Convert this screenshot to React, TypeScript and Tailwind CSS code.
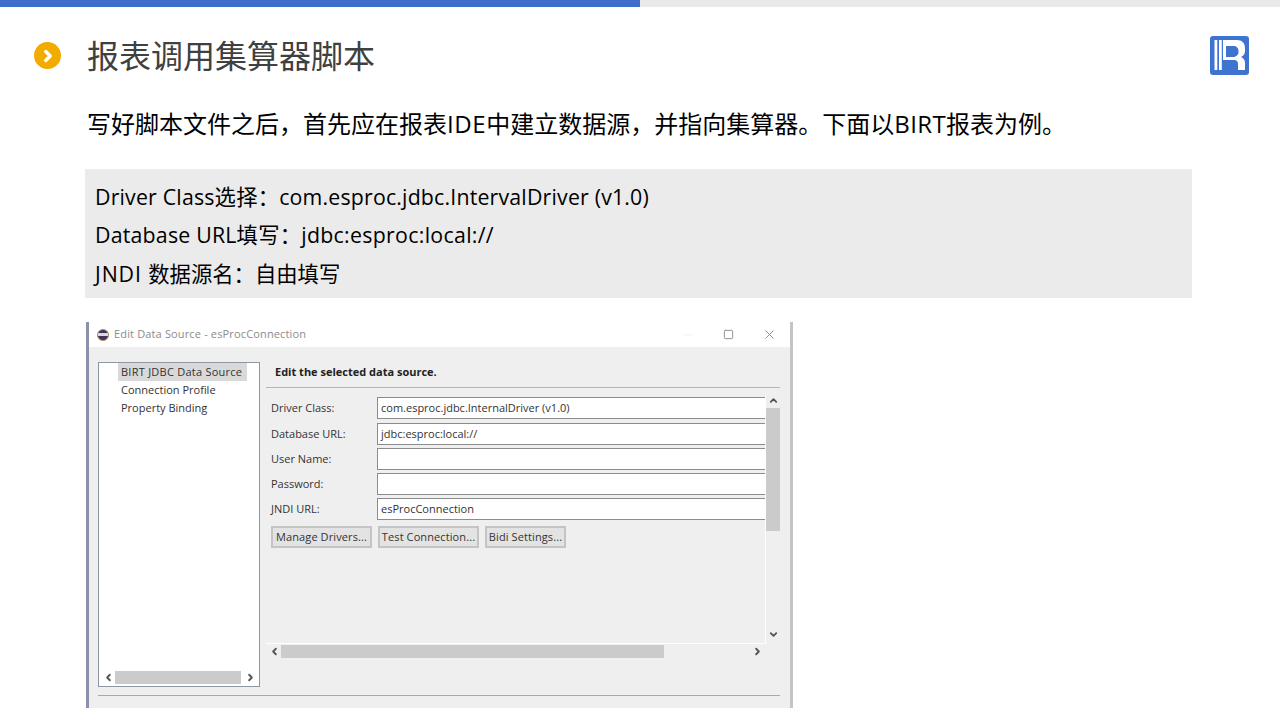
import { ChevronDown, ChevronLeft, ChevronRight, ChevronUp, Minus, Square, X } from "lucide-react";

const FONT = "font-['Open_Sans','Noto_Sans_CJK_SC',sans-serif]";

const fields = [
    { label: "Driver Class:", value: "com.esproc.jdbc.InternalDriver (v1.0)", gap: "mb-[4px]" },
    { label: "Database URL:", value: "jdbc:esproc:local://", gap: "mb-[3px]" },
    { label: "User Name:", value: "", gap: "mb-[3px]" },
    { label: "Password:", value: "", gap: "mb-[3px]" },
    { label: "JNDI URL:", value: "esProcConnection", gap: "mb-[3px]" },
];

const Logo = () => (
    <svg width="39" height="39" viewBox="0 0 39 39">
        <rect width="39" height="39" rx="3" fill="#3f73d0" />
        <rect x="4.500" y="4" width="2.800" height="30" fill="#fff" />
        <rect x="9" y="4" width="2.800" height="30" fill="#fff" />
        <path
            fillRule="evenodd"
            d="M13 4h14c5 0 8 3 8 8v3c0 3-1.500 5-4 6 2.500 1 4 3 4 6v7h-7v-6c0-2.500-1.500-4-4-4h-11zM16 10v11h7c2.500 0 5.500-1.500 5.500-5v-1c0-3-2-5-5-5z"
            fill="#fff"
        />
    </svg>
);

const DialogButton = ({ label, width }: { label: string; width: string }) => (
    <div className={`${width} h-[22px] flex items-center justify-center bg-[#e3e3e3] border-2 border-[#c4c4c4] text-[11px] tracking-[0.1px] text-[#333]`}>
        {label}
    </div>
);

const EditDataSource = () => (
    <div className={`${FONT} w-[707px] h-[386px] ml-[86px] mt-[24px] flex flex-col border-l-[3px] border-l-[#8c90a8] border-r-[3px] border-r-[#c4c4c4] bg-[#efefef] text-[#333]`}>
        <div className="h-[25px] mb-[1px] bg-white flex items-center pl-[8px] pr-[13px] shrink-0">
            <div className="w-[12px] h-[12px] rounded-full bg-[#3b3560] border border-[#c08a50] flex items-center">
                <div className="w-full h-[3px] bg-[#d8d8e8]" />
            </div>
            <span className="ml-[5px] text-[11px] tracking-[0.15px] text-[#8c8c8c]">Edit Data Source - esProcConnection</span>
            <Minus size={12} strokeWidth={1} className="ml-auto text-[#e0e0e0]" />
            <Square size={11} strokeWidth={2} className="ml-[29px] text-[#888]" />
            <X size={15} strokeWidth={1.5} className="ml-[28px] text-[#888]" />
        </div>

        <div className="flex-1 flex flex-col pl-[9px] pr-[10px] pt-[14px]">
            <div className="flex h-[325px]">
                <div className="w-[162px] border border-[#8f96a3] bg-white flex flex-col pl-[19px] text-[11px] leading-[18px]">
                    <div className="w-[129px] h-[18px] bg-[#d9d9d9] pl-[3px] tracking-[0.25px]">BIRT JDBC Data Source</div>
                    <div className="pl-[3px]">Connection Profile</div>
                    <div className="pl-[3px]">Property Binding</div>
                    <div className="mt-auto -ml-[19px] mb-[2px] flex items-center h-[13px] pl-[2px] pr-[2px] text-[#555]">
                        <ChevronLeft size={11} strokeWidth={4} className="ml-[2px]" />
                        <div className="w-[126px] h-[13px] ml-[1px] bg-[#cbcbcb]" />
                        <ChevronRight size={11} strokeWidth={4} className="ml-[4px]" />
                    </div>
                </div>

                <div className="w-[514px] ml-[6px] flex flex-col">
                    <div className="h-[26px] border-b border-b-[#b5b5b5] pl-[9px] pt-[1px] text-[11px] leading-[18px] font-bold text-[#222]">
                        Edit the selected data source.
                    </div>
                    <div className="flex h-[249px] mt-[7px]">
                        <div className="w-[500px] border-r border-b border-white flex flex-col pl-[5px] pt-[2px]">
                            {fields.map((f) => (
                                <div key={f.label} className={`flex items-center h-[22px] ${f.gap}`}>
                                    <span className="w-[106px] text-[11px]">{f.label}</span>
                                    <div className="flex-1 h-[22px] bg-white border-y border-l border-[#8c8c8c] pl-[3px] text-[11px] leading-[20px]">
                                        {f.value}
                                    </div>
                                </div>
                            ))}
                            <div className="flex gap-[6px] mt-[3px]">
                                <DialogButton label="Manage Drivers..." width="w-[101px]" />
                                <DialogButton label="Test Connection..." width="w-[101px]" />
                                <DialogButton label="Bidi Settings..." width="w-[81px]" />
                            </div>
                        </div>
                        <div className="w-[14px] flex flex-col items-center text-[#555]">
                            <ChevronUp size={11} strokeWidth={4} className="shrink-0" />
                            <div className="w-[14px] h-[123px] mt-[2px] bg-[#cbcbcb] shrink-0" />
                            <ChevronDown size={11} strokeWidth={4} className="shrink-0 mt-[98px]" />
                        </div>
                    </div>
                    <div className="w-[500px] h-[14px] flex items-center text-[#555]">
                        <ChevronLeft size={11} strokeWidth={4} className="ml-[3px] shrink-0" />
                        <div className="w-[383px] h-[13px] ml-[1px] bg-[#cbcbcb] shrink-0" />
                        <ChevronRight size={11} strokeWidth={4} className="ml-[88px] shrink-0" />
                    </div>
                </div>
            </div>
            <div className="h-[1px] w-[682px] mt-[8px] bg-[#a8a8a8]" />
        </div>
    </div>
);

export default function App() {
    return (
        <div className={`${FONT} w-[1280px] h-[720px] bg-white overflow-hidden flex flex-col`}>
            <div className="flex h-[7px] shrink-0">
                <div className="w-[640px] bg-[#3f6fca]" />
                <div className="w-[640px] bg-[#e9e9e9]" />
            </div>

            <div className="flex items-center h-[64px] mt-[20px] pl-[34px] pr-[31px] shrink-0">
                <div className="w-[27px] h-[27px] rounded-full bg-[#f2ab00] flex items-center justify-center text-white mt-[-7px]">
                    <ChevronRight size={18} strokeWidth={4.5} />
                </div>
                <h1 className="ml-[26px] text-[32px] leading-[44px] text-[#404040] font-normal mt-[-6px]">报表调用集算器脚本</h1>
                <div className="ml-auto mt-[-8px]">
                    <Logo />
                </div>
            </div>

            <p className="ml-[87px] mt-[15px] h-[36px] text-[24px] leading-[36px] text-black shrink-0">
                写好脚本文件之后，首先应在报表<span className="tracking-[0.6px]">IDE</span>中建立数据源，并指向集算器。下面以<span className="tracking-[0.4px]">BIRT</span>报表为例。
            </p>

            <div className="ml-[85px] mt-[27px] w-[1107px] h-[129px] bg-[#ebebeb] pl-[10px] pt-[9px] text-[21.33px] leading-[38.5px] text-black shrink-0">
                <div className="tracking-[0.18px]">Driver Class选择：com.esproc.jdbc.IntervalDriver (v1.0)</div>
                <div className="-mt-[1px] mb-[1px] tracking-[0.2px]">
                    Database URL填写：<span className="tracking-[0.3px]">jdbc:esproc:local://</span>
                </div>
                <div>
                    <span className="tracking-[0.9px]">JNDI </span>数据源名：自由填写
                </div>
            </div>

            <EditDataSource />
        </div>
    );
}
